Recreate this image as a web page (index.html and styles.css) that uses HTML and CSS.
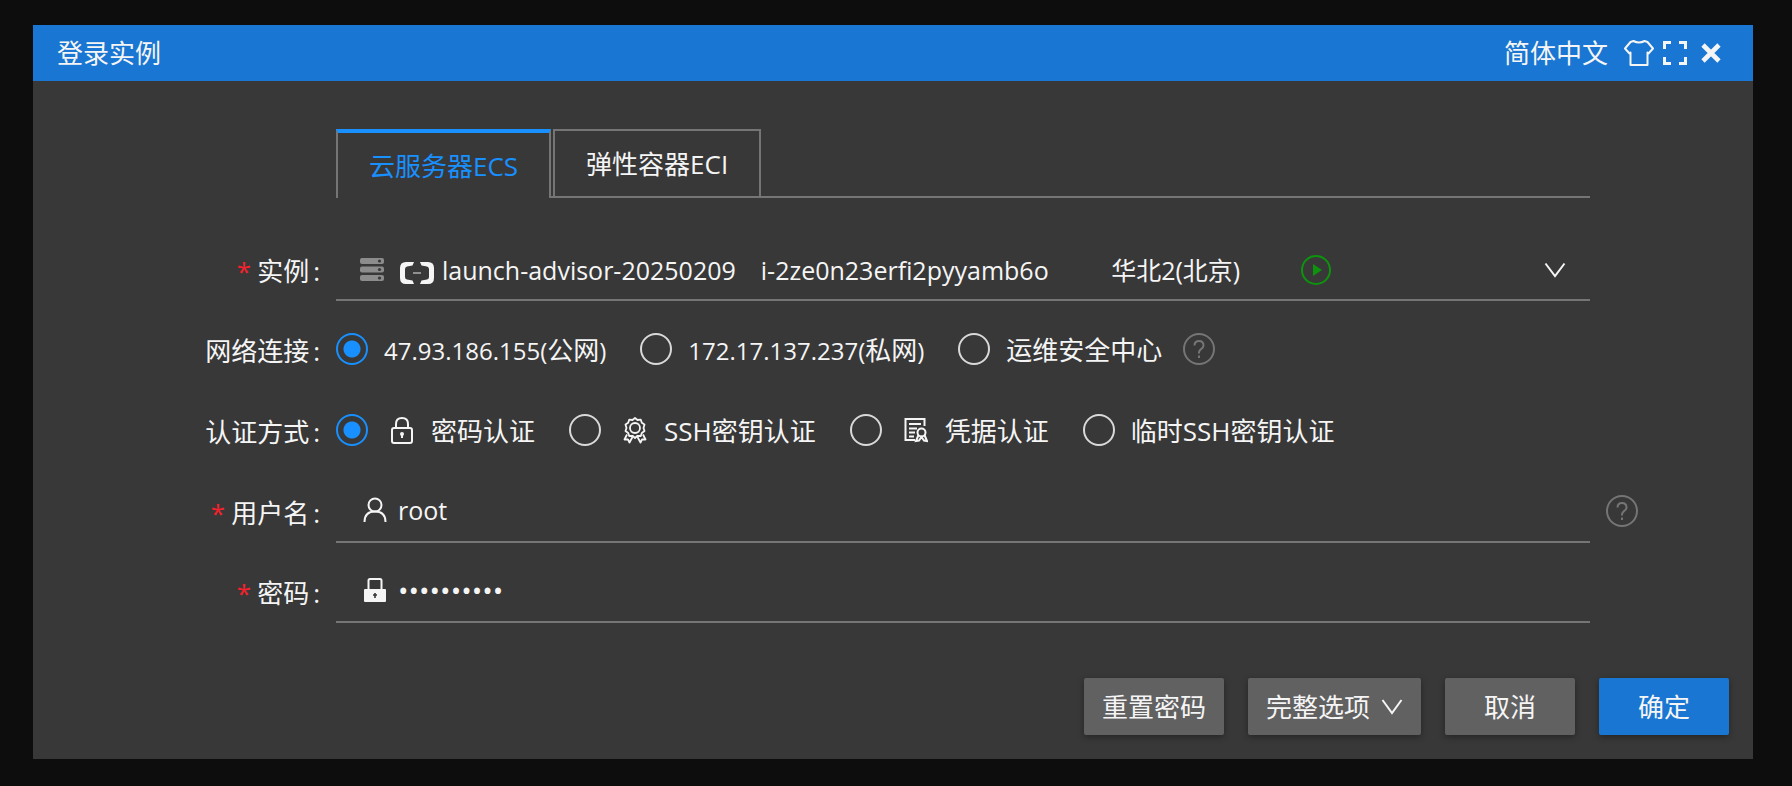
FILE: index.html
```
<!DOCTYPE html>
<html lang="zh-CN">
<head>
	<meta charset="utf-8">
	<title>登录实例</title>
	<link rel="stylesheet" href="styles.css">
</head>
<body>

	<div class="dialog">
		<header class="titlebar">
			<h1 class="title">登录实例</h1>
			<div class="tools">
				<select class="lang" aria-label="语言">
					<option>简体中文</option>
				</select>
				<button type="button" class="tool" aria-label="主题">
					<svg width="30" height="28" viewBox="0 0 30 28" fill="none" stroke="currentColor" stroke-width="2" stroke-linejoin="round"><path d="M9.500 2Q15 5 20.500 2L23.500 3L29 9.500L24.500 14.500L23.500 13.500V26H6.500V13.500L5.500 14.500L1 9.500L6.500 3Z"/></svg>
				</button>
				<button type="button" class="tool" aria-label="全屏">
					<svg width="24" height="24" viewBox="0 0 24 24" fill="none" stroke="currentColor" stroke-width="3"><path d="M1.500 8V1.500H8M16 1.500H22.500V8M22.500 16V22.500H16M8 22.500H1.500V16"/></svg>
				</button>
				<button type="button" class="tool close" aria-label="关闭">
					<svg width="20" height="20" viewBox="0 0 20 20" fill="none" stroke="currentColor" stroke-width="4.600"><path d="M2 2L18 18M18 2L2 18"/></svg>
				</button>
			</div>
		</header>

		<form class="form">
			<nav class="tabs">
				<button type="button" class="tab active">云服务器ECS</button>
				<button type="button" class="tab">弹性容器ECI</button>
			</nav>

			<div class="row">
				<label class="label required" for="instance">实例</label>
				<div class="field picker">
					<svg class="server" width="24" height="24" viewBox="0 0 24 24"><g fill="#8c8c8c"><rect width="24" height="6" rx="2"/><rect y="8.500" width="24" height="6" rx="2"/><rect y="17" width="24" height="6" rx="2"/></g><g fill="#383838"><circle cx="19.500" cy="3" r="1.600"/><circle cx="19.500" cy="11.500" r="1.600"/><circle cx="19.500" cy="20" r="1.600"/></g></svg>
					<svg class="cloud" width="34" height="28" viewBox="0 -6 34 28"><path d="M14 0H6Q0 0 0 6V16Q0 22 6 22H14L12.500 18.500L7 17.500Q5 17 5 15V7Q5 5 7 4.500L12.500 3.500ZM20 0H28Q34 0 34 6V16Q34 22 28 22H20L21.500 18.500L27 17.500Q29 17 29 15V7Q29 5 27 4.500L21.500 3.500Z" fill="#f5f5f5"/><path d="M13 11H21" stroke="#a8a8a8" stroke-width="1.600"/></svg>
					<select class="instance" id="instance">
						<option>launch-advisor-20250209&emsp;i-2ze0n23erfi2pyyamb6o&emsp;&emsp;&ensp;华北2(北京)</option>
					</select>
					<svg class="running" width="30" height="30" viewBox="0 0 30 30"><circle cx="15" cy="15" r="14" fill="none" stroke="#0e930e" stroke-width="2"/><path d="M12 9V21L21 15Z" fill="#0e930e"/></svg>
					<svg class="arrow" width="22" height="16" viewBox="0 0 22 16" fill="none" stroke="currentColor" stroke-width="2"><path d="M1.500 1.500L11 14L20.500 1.500"/></svg>
				</div>
			</div>

			<div class="row options">
				<span class="label" id="net">网络连接</span>
				<div class="choices" role="radiogroup" aria-labelledby="net">
					<label class="choice"><input type="radio" name="net" checked><span class="text"><span class="num">47.93.186.155(</span>公网<span class="num">)</span></span></label>
					<label class="choice"><input type="radio" name="net"><span class="text"><span class="num">172.17.137.237(</span>私网<span class="num">)</span></span></label>
					<label class="choice"><input type="radio" name="net"><span class="text">运维安全中心</span></label>
					<button type="button" class="help" aria-label="帮助">
						<svg width="32" height="32" viewBox="0 0 32 32" fill="none" stroke="currentColor" stroke-width="2"><circle cx="16" cy="16" r="15"/><path d="M11.500 12.500Q11.500 8 16 8T20.500 12.500Q20.500 14.500 18 16.200Q16 17.600 16 19.500V20.500M16 22.500V25"/></svg>
					</button>
				</div>
			</div>

			<div class="row options">
				<span class="label" id="auth">认证方式</span>
				<div class="choices" role="radiogroup" aria-labelledby="auth">
					<label class="choice"><input type="radio" name="auth" checked>
						<svg class="kind" width="24" height="28" viewBox="0 0 24 28" fill="none" stroke="currentColor" stroke-width="2"><rect x="2" y="12" width="20" height="15" rx="2"/><path d="M6 12V8Q6 2 12 2T18 8V12M12 18V22"/><circle cx="12" cy="18" r="2" fill="currentColor" stroke="none"/></svg>
						<span class="text">密码认证</span></label>
					<label class="choice"><input type="radio" name="auth">
						<svg class="kind" width="24" height="28" viewBox="0 0 24 28" fill="none" stroke="currentColor" stroke-width="1.800" stroke-linejoin="round"><path d="M12 2L14.500 4L17.800 3.700L18.800 6.700L21.500 8.500L20.500 12L21.500 15L18.800 17L17.800 20L14.500 19.800L12 22L9.500 19.800L6.200 20L5.200 17L2.500 15L3.500 12L2.500 8.500L5.200 6.700L6.200 3.700L9.500 4Z"/><circle cx="12" cy="12" r="5"/><path d="M4 18.500L1.500 23.500L5 23.500L6.500 26.500L9.500 21M20 18.500L22.500 23.500L19 23.500L17.500 26.500L14.500 21"/></svg>
						<span class="text">SSH密钥认证</span></label>
					<label class="choice"><input type="radio" name="auth">
						<svg class="kind" width="24" height="28" viewBox="0 0 24 28" fill="none" stroke="currentColor" stroke-width="2"><path d="M20.500 10V3H1.500V24H11M5 8H17M5 12.500H13M5 16.500H11M5 20.500H10"/><circle cx="17.500" cy="16.500" r="4"/><path d="M14.500 19L12 25L15 24.500L17.500 21L20 24.500L23 25L20.500 19"/></svg>
						<span class="text">凭据认证</span></label>
					<label class="choice"><input type="radio" name="auth"><span class="text">临时SSH密钥认证</span></label>
				</div>
			</div>

			<div class="row">
				<label class="label required" for="user">用户名</label>
				<div class="field">
					<svg class="prefix" width="24" height="26" viewBox="0 0 24 26" fill="none" stroke="currentColor" stroke-width="2"><circle cx="12" cy="8" r="6.500"/><path d="M1.500 25Q1.500 14.500 12 14.500T22.500 25"/></svg>
					<input class="input" type="text" id="user" value="root">
				</div>
				<button type="button" class="help outside" aria-label="帮助">
					<svg width="32" height="32" viewBox="0 0 32 32" fill="none" stroke="currentColor" stroke-width="2"><circle cx="16" cy="16" r="15"/><path d="M11.500 12.500Q11.500 8 16 8T20.500 12.500Q20.500 14.500 18 16.200Q16 17.600 16 19.500V20.500M16 22.500V25"/></svg>
				</button>
			</div>

			<div class="row">
				<label class="label required" for="pass">密码</label>
				<div class="field">
					<svg class="prefix" width="24" height="26" viewBox="0 0 24 26"><path d="M5.500 12V3.500Q5.500 2 7 2H17Q18.500 2 18.500 3.500V12" fill="none" stroke="currentColor" stroke-width="2"/><rect x="1" y="12" width="22" height="13" rx="1" fill="currentColor"/><path d="M12 16V21M10 18H14" stroke="#383838" stroke-width="1.600"/></svg>
					<input class="input" type="password" id="pass" value="abcdefghij">
				</div>
			</div>
		</form>

		<footer class="footer">
			<button type="button" class="btn">重置密码</button>
			<button type="button" class="btn">完整选项
				<svg width="22" height="16" viewBox="0 0 22 16" fill="none" stroke="currentColor" stroke-width="2"><path d="M1.500 1L11 14L20.500 1"/></svg>
			</button>
			<button type="button" class="btn wide">取消</button>
			<button type="button" class="btn wide primary">确定</button>
		</footer>
	</div>

</body>
</html>
```
FILE: styles.css
```
*{
	box-sizing: border-box;
}

body{
	margin: 0;
	padding: 25px 39px 27px 33px;
	background: #0d0d0d;
	color: #f5f5f5;
	font: 26px/40px "Open Sans", "Noto Sans CJK SC", sans-serif;
}

button, input, select{
	margin: 0;
	padding: 0;
	border: none;
	background: none;
	color: inherit;
	font: inherit;
}

select{
	appearance: none;
}

svg{
	display: block;
	flex: none;
}

.num{
	font-size: 24px;
}

.dialog{
	background: #383838;
}

.titlebar{
	display: flex;
	justify-content: space-between;
	align-items: center;
	height: 56px;
	padding: 0 32px 0 24px;
	background: #1976d2;
}

.title{
	margin: 0;
	font-size: 26px;
	font-weight: normal;
}

.tools{
	display: flex;
	align-items: center;
	gap: 9px;
}

.lang{
	margin-right: 6px;
}

.close{
	margin-left: 5px;
}

/* form */

.form{
	display: flex;
	flex-direction: column;
	gap: 16px;
	padding: 48px 0 0;
}

.tabs{
	display: flex;
	gap: 2px;
	margin: 0 163px 23px 303px;
	box-shadow: inset 0 -2px #757575;
}

.tab{
	height: 69px;
	padding: 0 31px;
	border: 2px solid #757575;
}

.tab.active{
	border-top: 4px solid #1890ff;
	border-bottom: none;
	background: #383838;
	color: #1890ff;
}

.row{
	display: grid;
	grid-template-columns: 303px 1fr 163px;
	align-items: center;
	min-height: 64px;
}

.options{
	min-height: 65px;
	padding-bottom: 2px;
}

.label{
	padding: 4px 16px 0 0;
	text-align: right;
}

.label::after{
	content: ":";
	margin-left: 4px;
}

.required::before{
	content: "*";
	margin-right: 6px;
	color: #f5222d;
}

.field{
	display: flex;
	align-items: center;
	height: 64px;
	padding: 0 24px;
	border-bottom: 2px solid #757575;
}

.picker{
	padding-top: 3px;
}

.server{
	margin-right: 16px;
}

.cloud{
	margin-right: 8px;
}

.instance{
	font-size: 25px;
}

.running{
	margin-left: 60px;
}

.arrow{
	margin-left: auto;
}

.prefix{
	margin: 0 11px 0 3px;
}

.input{
	flex: 1;
	min-width: 0;
	height: 48px;
	font-size: 25px;
}

.input[type="password"]{
	font-size: 28px;
}

.choices{
	display: flex;
	align-items: center;
	gap: 34px;
	white-space: nowrap;
}

.choice{
	display: flex;
	align-items: center;
}

.choice input{
	appearance: none;
	width: 32px;
	height: 32px;
	margin-right: 16px;
	border: 2px solid #d9d9d9;
	border-radius: 50%;
}

.choice input:checked{
	border-color: #1890ff;
	background: radial-gradient(circle, #1890ff 8px, transparent 9px);
}

.text{
	padding-top: 3px;
}

.kind{
	margin: 0 17px 0 6px;
}

.help{
	color: #757575;
}

.choices .help{
	margin-left: -13px;
}

.outside{
	justify-self: start;
	margin-left: 16px;
}

/* bottom buttons */

.footer{
	display: flex;
	justify-content: flex-end;
	gap: 24px;
	padding: 55px 24px 24px;
}

.btn{
	display: flex;
	justify-content: center;
	align-items: center;
	gap: 11px;
	height: 57px;
	padding: 0 18px;
	border-radius: 2px;
	background: #616161;
	box-shadow: 0 2px 6px rgba(0, 0, 0, .35);
}

.wide{
	min-width: 130px;
}

.primary{
	background: #1976d2;
}
```
